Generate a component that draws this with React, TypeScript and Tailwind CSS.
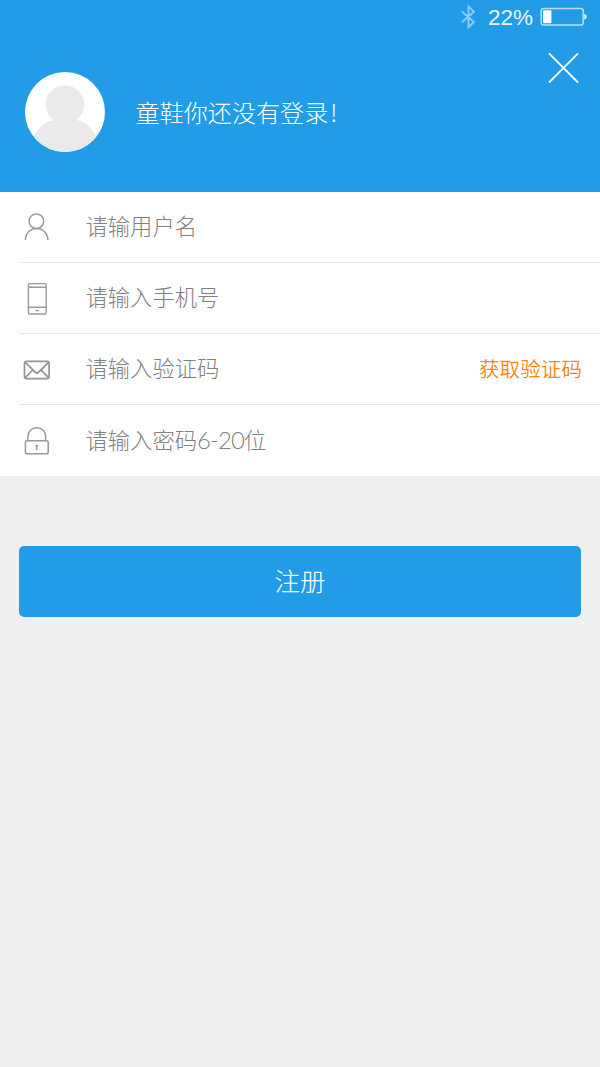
import type { ReactNode } from "react";

function BluetoothIcon() {
  return (
    <svg width="16" height="26" viewBox="0 0 16 26" fill="none" stroke="#fff" strokeWidth="1.8" opacity="0.5">
      <path d="M1.8 7.5 14 18 8.500 23.200V2.300L14 7.800 1.800 18.300" />
    </svg>
  );
}

function BatteryIcon() {
  return (
    <svg width="47" height="20" viewBox="0 0 47 20" fill="none">
      <rect x="1.2" y="1.4" width="42" height="16.6" rx="2.6" stroke="#fff" strokeOpacity="0.68" strokeWidth="1.5" />
      <rect x="3" y="3.2" width="8.4" height="13" rx="1" fill="#fff" />
      <path d="M44.2 7c1.600.2 2.500 1.200 2.500 2.700s-.9 2.500-2.500 2.700z" fill="#fff" fillOpacity="0.9" />
    </svg>
  );
}

function UserIcon() {
  return (
    <svg width="28" height="30" viewBox="0 0 28 30" fill="none" stroke="#999" strokeWidth="1.5">
      <circle cx="13.4" cy="9.2" r="7.3" />
      <path d="M2.4 28c0-6.700 4.800-11.500 11.200-11.500S24.900 21.300 24.900 28" />
    </svg>
  );
}

function PhoneIcon() {
  return (
    <svg className="translate-y-px" width="28" height="34" viewBox="0 0 28 34" fill="none" stroke="#999" strokeWidth="1.4">
      <rect x="5.400" y="1.600" width="17.800" height="30.400" rx="1.200" />
      <path d="M5.400 5.300h17.800M5.400 25.200h17.800M12.300 28.600h3.700" />
    </svg>
  );
}

function MailIcon() {
  return (
    <svg className="translate-y-px" width="28" height="22" viewBox="0 0 28 22" fill="none" stroke="#949494" strokeWidth="1.7">
      <rect x="1.500" y="2.400" width="24.600" height="17.200" rx="2" />
      <path d="M2.300 3.400 12.200 13.100c1.200 1.200 2.300 1.200 3.500 0L25.500 3.400M2.300 18.600 9.700 11M25.500 18.600 18.100 11" />
    </svg>
  );
}

function LockIcon() {
  return (
    <svg className="translate-y-px" width="28" height="30" viewBox="0 0 28 30" fill="none" stroke="#999" strokeWidth="1.5">
      <rect x="2.400" y="14.800" width="22.800" height="12.900" rx="1.800" />
      <path d="M4.900 14.800V10.500c0-5 3.900-8.700 8.900-8.700s8.900 3.700 8.900 8.700v4.300" />
      <path d="M13.800 19v5" />
      <circle cx="13.800" cy="19.700" r="0.900" fill="#999" stroke="none" />
      <path d="M12.200 19.700h3.200" strokeWidth="1" />
    </svg>
  );
}

type Field = {
  id: string;
  icon: ReactNode;
  label: ReactNode;
  action?: string;
};

const fields: Field[] = [
  { id: "username", icon: <UserIcon />, label: "请输用户名" },
  { id: "phone", icon: <PhoneIcon />, label: "请输入手机号" },
  { id: "code", icon: <MailIcon />, label: "请输入验证码", action: "获取验证码" },
  {
    id: "password",
    icon: <LockIcon />,
    label: (
      <>
        请输入密码
        <span className="text-[24px] tracking-[-0.900px]">6-20</span>位
      </>
    ),
  },
];

export default function App() {
  return (
    <div className="min-h-[1067px] w-full bg-[#efefef] font-['Lato','Noto_Sans_CJK_SC',sans-serif] font-light">
      <header className="h-48 bg-[#229ce7] text-white">
        {/* Status bar */}
        <div className="flex h-8 items-center justify-end pt-px pr-[13px]">
          <BluetoothIcon />
          <span className="mr-[7px] ml-3 pt-0.5 font-['Liberation_Sans',sans-serif] text-[22.5px] leading-8 font-normal text-white/90">
            22%
          </span>
          <BatteryIcon />
        </div>

        <div className="flex items-start justify-between pt-5 pr-[21px] pl-[25px]">
          <div className="flex items-center pt-5">
            <svg className="rounded-full bg-white" width="80" height="80" viewBox="0 0 80 80" fill="#eaeaea">
              <circle cx="40" cy="32.6" r="19.200" />
              <path d="M7 80V68C12 55 22 48 32 47.500H48C58 48 68 55 73 68V80z" />
            </svg>
            <p className="ml-[30.500px] font-['Noto_Sans_CJK_SC',sans-serif] text-[24.100px] leading-8">
              童鞋你还没有登录<span className="pl-0.5">!</span>
            </p>
          </div>
          <button type="button" aria-label="关闭">
            <svg width="31" height="32" viewBox="0 0 31 32" fill="none" stroke="#fff" strokeWidth="1.800">
              <path d="M1 1.300 30 30.500M30 1.300 1 30.500" />
            </svg>
          </button>
        </div>
      </header>

      <main>
        <ul className="bg-white pl-[19px]">
          {fields.map((field) => (
            <li
              key={field.id}
              className="flex h-[71px] items-center border-b border-[#e6e6e6] pr-[18px] pl-1 last:border-transparent"
            >
              <span className="flex w-7 justify-center">{field.icon}</span>
              <span className="ml-[34.500px] flex-1 text-[22.300px] leading-8 text-[#808080]">{field.label}</span>
              {field.action && (
                <button type="button" className="text-[20.600px] leading-8 font-[350] text-[#ff8414]">
                  {field.action}
                </button>
              )}
            </li>
          ))}
        </ul>

        <div className="px-[19px] pt-[70px]">
          <button type="button" className="h-[71px] w-full rounded-[5px] bg-[#229ce7] text-[25.500px] text-white">
            注册
          </button>
        </div>
      </main>
    </div>
  );
}
